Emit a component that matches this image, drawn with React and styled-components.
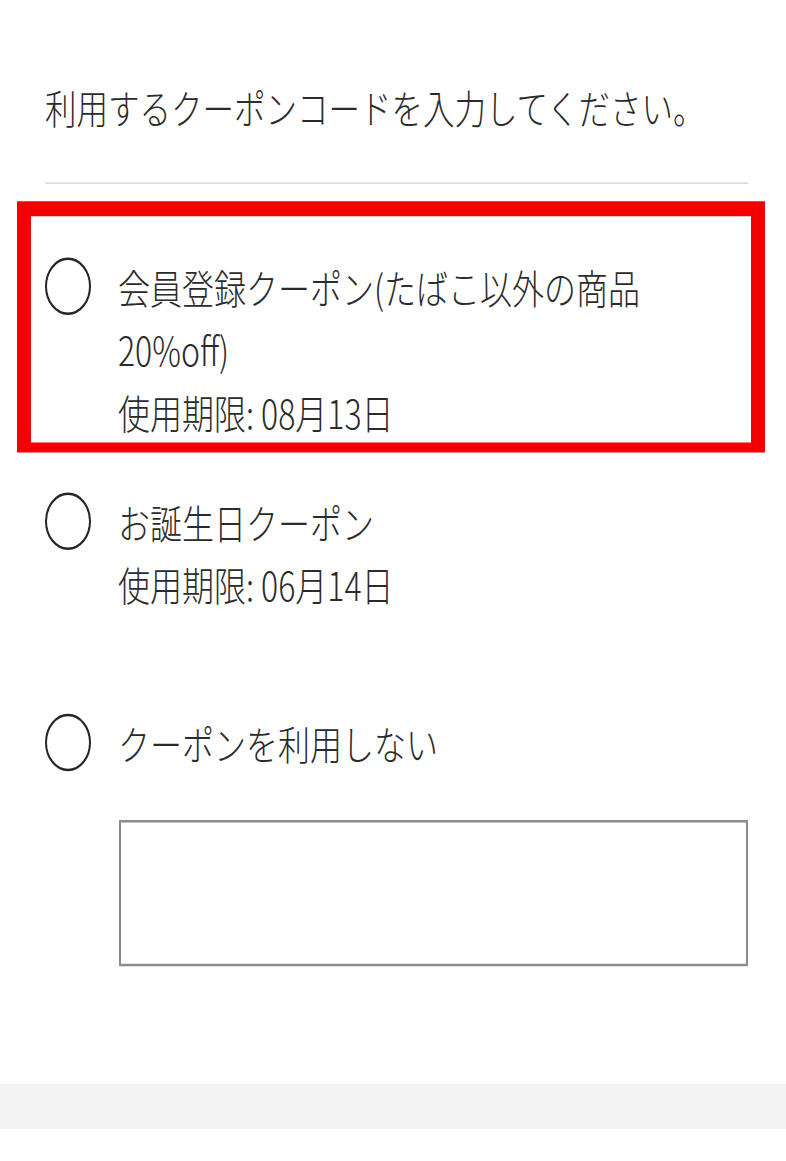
import React from 'react';
import styled, { createGlobalStyle } from "styled-components";

const GlobalStyle = createGlobalStyle`
html, body {
  margin: 0;
  padding: 0;
  background: #fff;
}

body {
  min-height: 1161px;
}
`;

const Screen = styled.div`
width: 786px;
transform: scaleY(1.25);
transform-origin: top left;
font-family: "Noto Sans CJK JP", "Noto Sans", sans-serif;
font-weight: 300;
color: #2b2b2b;
`;

const Content = styled.div`
padding: 60px 38px 0 45px;
`;

const Heading = styled.p`
margin: 0;
font-size: 31.5px;
line-height: 50px;
font-weight: inherit;
`;

const Divider = styled.hr`
margin: 36px 0 14px;
border: 0;
height: 1px;
background: #cfcfcf;
`;

const Option = styled.label`
display: flex;
align-items: flex-start;
gap: 27px;
margin: ${props => props.$gap || 0}px 0 0;
cursor: pointer;

${props => props.$highlight && `
  margin-left: -28px;
  margin-right: -17px;
  border-style: solid;
  border-color: #f40000;
  border-width: 12px 14px 8px 14px;
  padding: 31px 0 0 14px;
`}
`;

const Radio = styled.span`
flex: none;
width: 46px;
height: 46px;
margin-top: 2px;
box-sizing: border-box;
border: 2px solid #262626;
border-radius: 50%;
`;

const Label = styled.div`
max-width: 580px;
font-size: 32px;
line-height: 50px;
`;

const Expiry = styled.div`
font-size: 32px;
line-height: 50px;
`;

const CodeInput = styled.textarea`
display: block;
box-sizing: border-box;
margin: 37px 0 0 74px;
width: calc(100% - 74px);
height: 117px;
border: 2px solid #8c8c8c;
border-radius: 0;
padding: 8px;
resize: none;
outline: none;
font: inherit;
`;

const Band = styled.div`
margin-top: 94px;
height: 36px;
background: #f3f3f3;
`;

const coupons = [
    { id: 'member', title: '会員登録クーポン(たばこ以外の商品20%off)', expiry: '使用期限: 08月13日', highlight: true, gap: 0 },
    { id: 'birthday', title: 'お誕生日クーポン', expiry: '使用期限: 06月14日', gap: 30 },
    { id: 'none', title: 'クーポンを利用しない', gap: 77 },
];

function App() {

    let options = coupons.map((coupon) => {
        return (
            <Option key={coupon.id} $highlight={coupon.highlight} $gap={coupon.gap}>
                <Radio />
                <div>
                    <Label>{coupon.title}</Label>
                    {coupon.expiry && <Expiry>{coupon.expiry}</Expiry>}
                </div>
            </Option>
        );
    });

    return (
        <Screen>
            <GlobalStyle />
            <Content>
                <Heading>利用するクーポンコードを入力してください。</Heading>
                <Divider />
                {options}
                <CodeInput />
            </Content>
            <Band />
        </Screen>
    );
}

export default App;
